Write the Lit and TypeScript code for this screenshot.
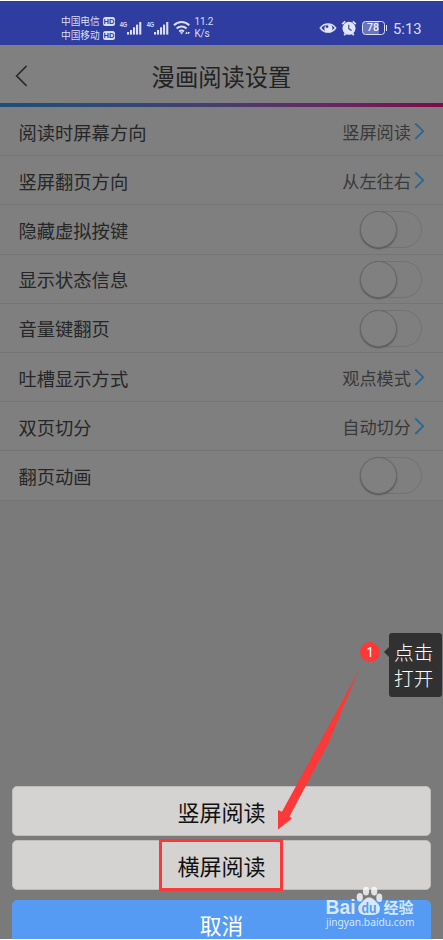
import { LitElement, html, css } from "lit";
import { customElement } from "lit/decorators.js";

interface Row {
  label: string;
  value?: string;
}

const ROWS: Row[] = [
  { label: "阅读时屏幕方向", value: "竖屏阅读" },
  { label: "竖屏翻页方向", value: "从左往右" },
  { label: "隐藏虚拟按键" },
  { label: "显示状态信息" },
  { label: "音量键翻页" },
  { label: "吐槽显示方式", value: "观点模式" },
  { label: "双页切分", value: "自动切分" },
  { label: "翻页动画" },
];

@customElement("status-bar")
class StatusBar extends LitElement {
  static styles = css`
    :host {
      display: flex;
      align-items: center;
      height: 44px;
      padding: 10px 21px 0 61px;
      box-sizing: border-box;
      background: #303da0;
      color: #d9def6;
      flex: none;
      white-space: nowrap;
    }
    .carriers {
      display: flex;
      flex-direction: column;
      width: 57px;
    }
    .carrier {
      display: flex;
      align-items: center;
      gap: 3px;
      height: 14px;
      font-size: 9.7px;
      line-height: 14px;
    }
    .hd {
      width: 12.5px;
      height: 9px;
      border-radius: 2.5px;
      background: #d9def6;
      color: #303da0;
      font: 700 7.6px/9px "Liberation Sans", sans-serif;
      text-align: center;
    }
    .signal { width: 27px; height: 18px; }
    .wifi { width: 18px; height: 16px; margin-left: 1px; }
    .speed {
      width: 22px;
      margin: -1px 0 0 3.5px;
      font: 10px/12px Roboto, sans-serif;
      letter-spacing: -0.2px;
    }
    .fill { flex: 1; }
    .eye { width: 18px; height: 14px; }
    .alarm { width: 16px; height: 16px; margin-left: 3.5px; }
    .battery {
      display: flex;
      align-items: center;
      margin-left: 5px;
    }
    .cell {
      width: 23px;
      height: 14px;
      box-sizing: border-box;
      border: 1.5px solid #d9def6;
      border-radius: 3.5px;
      background: linear-gradient(90deg, #6974c0 78%, #303da0 78%);
      font: 500 10.5px/12px Roboto, sans-serif;
      text-align: center;
      color: #eef1ff;
    }
    .tip { width: 1.5px; height: 6px; margin-left: 1px; background: #d9def6; }
    .time {
      width: 29px;
      margin: 2px 0 0 6px;
      font: 14.8px/18px Roboto, sans-serif;
    }
    text { font: 700 7.5px "Liberation Sans", sans-serif; }
  `;

  private signal() {
    return html`<svg class="signal" viewBox="0 0 27 18" fill="#d9def6">
      <text x="1.7" y="7.7" textLength="7.6" lengthAdjust="spacingAndGlyphs">4G</text>
      <rect x="9" y="13" width="2.1" height="2.6" />
      <rect x="12" y="11" width="2.1" height="4.6" />
      <rect x="15" y="8.3" width="2.1" height="7.3" />
      <rect x="18" y="5.6" width="2.1" height="10" />
      <rect x="21.2" y="3" width="2.1" height="12.6" />
    </svg>`;
  }

  render() {
    return html`
      <div class="carriers">
        <div class="carrier">中国电信<span class="hd">HD</span></div>
        <div class="carrier">中国移动<span class="hd">HD</span></div>
      </div>
      ${this.signal()}${this.signal()}
      <svg class="wifi" viewBox="0 0 18 16" fill="none" stroke="#d9def6" stroke-width="2">
        <path d="M1 5.2C5.2.9 12 .9 16.2 5.2" />
        <path d="M3.6 8.5c2.9-2.7 7.1-2.7 10 0" />
        <path d="M6.2 11.6c1.5-1.3 3.3-1.3 4.8 0" />
        <path d="M7 12.3h3.2l-1.6 2.2z" fill="#d9def6" stroke="none" />
        <path d="M12.3 14l1.2-2.4 1.2 2.4zM14.5 12h2.4l-1.2 2.4z" fill="#d9def6" stroke="none" />
      </svg>
      <div class="speed">11.2<br />K/s</div>
      <div class="fill"></div>
      <svg class="eye" viewBox="0 0 18 14">
        <path d="M1.4 7C5 1.6 13 1.6 16.6 7 13 12.4 5 12.4 1.4 7z" fill="none" stroke="#d9def6" stroke-width="1.6" />
        <circle cx="9.4" cy="7.4" r="4" fill="#e4e8fb" />
        <circle cx="8" cy="5.6" r="1.4" fill="#303da0" />
      </svg>
      <svg class="alarm" viewBox="0 0 16 16">
        <circle cx="8" cy="8.3" r="6.5" fill="#e0e5fa" />
        <path d="M1.2 4.2L4.2 1.4M14.8 4.2l-3-2.8M3.2 15.2l1.5-2M12.8 15.2l-1.5-2" stroke="#e0e5fa" stroke-width="1.7" />
        <path d="M7.8 4.8v3.9l2.8 1.8" fill="none" stroke="#303da0" stroke-width="1.1" />
      </svg>
      <div class="battery"><div class="cell">78</div><div class="tip"></div></div>
      <div class="time">5:13</div>
    `;
  }
}

@customElement("setting-row")
class SettingRow extends LitElement {
  static properties = { label: {}, value: {} };
  declare label: string;
  declare value?: string;

  static styles = css`
    :host {
      display: flex;
      align-items: center;
      justify-content: space-between;
      height: 49.2px;
      box-sizing: border-box;
      padding: 1px 17px 0 18.5px;
      border-bottom: 1px solid #757575;
      color: #262626;
      font-size: 18.3px;
    }
    .value {
      display: flex;
      align-items: center;
      gap: 3px;
      font-size: 17.2px;
      color: #393939;
    }
    .chevron { width: 12px; height: 20px; }
    .switch {
      width: 62px;
      height: 37px;
      margin-right: 4px;
      box-sizing: border-box;
      border: 1px solid #727272;
      border-radius: 19px;
    }
    .knob {
      width: 37px;
      height: 37px;
      margin: -1px;
      box-sizing: border-box;
      border: 1px solid #686868;
      border-radius: 50%;
      background: #808080;
      box-shadow: 0 1px 1.5px #505050;
    }
  `;

  render() {
    return html`
      <span>${this.label}</span>
      ${this.value
        ? html`<span class="value">${this.value}
            <svg class="chevron" viewBox="0 0 12 20" fill="none" stroke="#2e668f" stroke-width="1.8">
              <path d="M1.3 1.5L9.2 9.2 1.3 17" />
            </svg></span>`
        : html`<div class="switch"><div class="knob"></div></div>`}
    `;
  }
}

@customElement("app-root")
class AppRoot extends LitElement {
  static styles = css`
    :host {
      display: flex;
      flex-direction: column;
      position: relative;
      width: 443px;
      height: 940px;
      box-sizing: border-box;
      overflow: hidden;
      border-top: 1px solid #fff;
      border-bottom: 1px solid #fff;
      background: #7a7a7a;
      font-family: "Noto Sans CJK SC", sans-serif;
    }
    .nav {
      display: grid;
      grid-template-columns: 60px 1fr 60px;
      align-items: center;
      height: 58px;
      flex: none;
      padding-top: 4px;
      box-sizing: border-box;
      background: #808080;
      color: #222;
    }
    .back { width: 14px; height: 24px; margin-left: 14px; }
    .title { text-align: center; font-size: 23.3px; line-height: 30px; }
    .rule {
      height: 4px;
      flex: none;
      background: linear-gradient(90deg, #1d5078 0%, #2c4b78 22%, #493d70 50%, #672765 75%, #7c0c4b 100%);
    }
    .list { background: #7f7f7f; flex: none; }
    .space { flex: 1; }
    .sheet {
      display: flex;
      flex-direction: column;
      flex: none;
      height: 153px;
      padding: 0 12px;
      font-size: 22px;
      color: #111;
    }
    .option {
      flex: none;
      height: 50px;
      margin-bottom: 4px;
      box-sizing: border-box;
      border: 1px solid #bebdbb;
      border-radius: 5px;
      background: #d5d3d1;
      line-height: 49px;
      text-align: center;
    }
    .cancel {
      flex: none;
      height: 50px;
      margin-top: 6px;
      box-sizing: border-box;
      border-radius: 5px;
      background: #559bf4;
      color: #fff;
      font-size: 21.8px;
      line-height: 49px;
      text-align: center;
    }
    .frame {
      position: absolute;
      left: 159px;
      top: 838px;
      width: 124px;
      height: 52px;
      box-sizing: border-box;
      border: 3px solid #fd3838;
    }
    .arrow { position: absolute; left: 270px; top: 664px; width: 100px; height: 170px; }
    .step {
      position: absolute;
      left: 360px;
      top: 641px;
      width: 20px;
      height: 20px;
      border-radius: 50%;
      background: #fd3838;
      color: #fff;
      font: 13.5px/20px "Noto Sans", sans-serif;
      text-align: center;
    }
    .tooltip {
      position: absolute;
      left: 389px;
      top: 632px;
      width: 53px;
      height: 64px;
      box-sizing: border-box;
      padding: 6px 0 0 5px;
      border-radius: 3px;
      background: #313131;
      color: #fff;
      font-size: 19.7px;
      font-weight: 300;
      line-height: 26px;
    }
    .tooltip::before {
      content: "";
      position: absolute;
      left: -5px;
      top: 14px;
      border: 5px solid transparent;
      border-left: 0;
      border-right-color: #313131;
    }
    .mark { position: absolute; left: 322px; top: 883px; width: 100px; height: 48px; }
    .brand { font: 700 19.5px "Liberation Sans", sans-serif; }
    .du { font: 700 14px "Liberation Sans", sans-serif; }
    .cn { font: 700 15px "Noto Sans CJK SC", sans-serif; }
    .site { font: 10.5px "Noto Sans", sans-serif; }
  `;

  render() {
    return html`
      <status-bar></status-bar>
      <div class="nav">
        <svg class="back" viewBox="0 0 14 24" fill="none" stroke="#2b2b2b" stroke-width="1.6">
          <path d="M12.6 1.9L2.6 11.9l10 10" />
        </svg>
        <div class="title">漫画阅读设置</div>
      </div>
      <div class="rule"></div>
      <div class="list">
        ${ROWS.map((r) => html`<setting-row .label=${r.label} .value=${r.value}></setting-row>`)}
      </div>
      <div class="space"></div>
      <div class="sheet">
        <div class="option">竖屏阅读</div>
        <div class="option">横屏阅读</div>
        <div class="cancel">取消</div>
      </div>
      <svg class="arrow" viewBox="270 665 100 170" fill="#fd3838">
        <path d="M358.2 671.5L328 744 289.5 816.5 292 818.5 278 829.5V810l4 1.8L320 742z" />
      </svg>
      <div class="frame"></div>
      <div class="step">1</div>
      <div class="tooltip">点击<br />打开</div>
      <svg class="mark" viewBox="322 884 100 48" fill="#fff" fill-opacity=".78">
        <text class="brand" x="325.5" y="914" textLength="30" lengthAdjust="spacingAndGlyphs">Bai</text>
        <ellipse cx="359.8" cy="897.2" rx="3.1" ry="4.2" />
        <ellipse cx="366" cy="891.2" rx="3.1" ry="4.4" />
        <ellipse cx="374.2" cy="891.2" rx="3.1" ry="4.4" />
        <ellipse cx="379.3" cy="897.8" rx="3" ry="4.2" />
        <path d="M369.2 897.5c3.5 0 5 2.5 7 4.5 3.5 3.3 4.2 5.3 3.5 8.5-1 3.8-4 4.6-10.5 4.4-6.5.2-9.5-.6-10.7-4.4-.8-3.2 0-5.2 3.6-8.5 2.1-2 3.6-4.5 7.1-4.5z" />
        <text class="du" x="361.6" y="913" fill="#559bf4" fill-opacity="1" textLength="15" lengthAdjust="spacingAndGlyphs">du</text>
        <text class="cn" x="383.5" y="913" textLength="30" lengthAdjust="spacingAndGlyphs">经验</text>
        <text class="site" x="326" y="925.5" textLength="88.5" lengthAdjust="spacingAndGlyphs">jingyan.baidu.com</text>
      </svg>
    `;
  }
}
